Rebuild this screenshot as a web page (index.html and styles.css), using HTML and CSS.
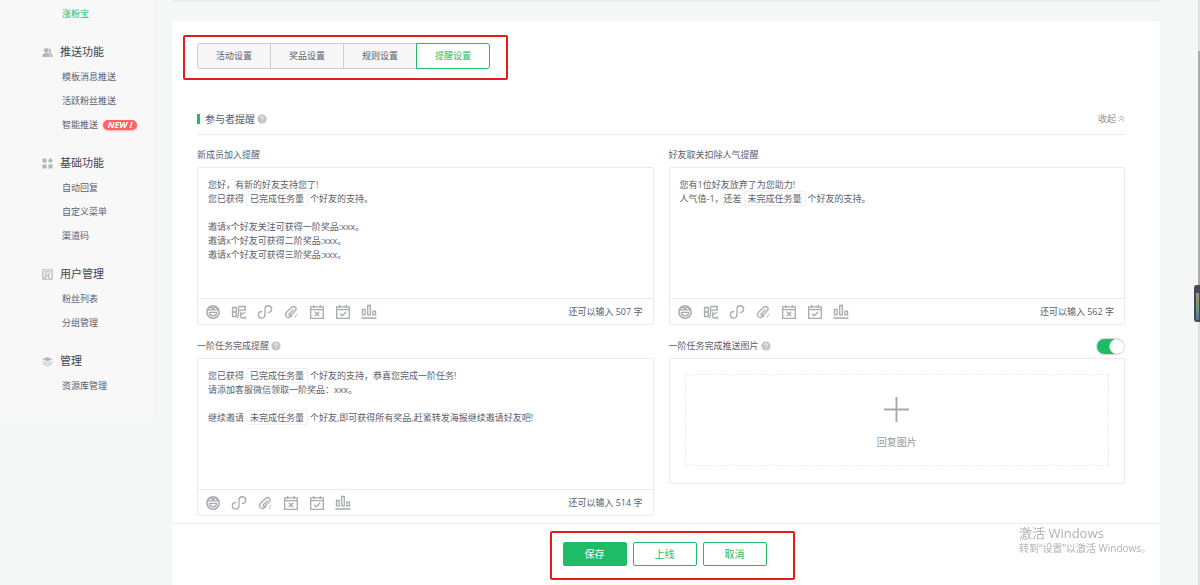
FILE: index.html
```html
<!DOCTYPE html>
<html lang="zh-CN">

<head>
    <meta charset="UTF-8">
    <meta name="viewport" content="width=device-width, initial-scale=1.0">
    <title>提醒设置</title>
    <link rel="stylesheet" href="styles.css">
</head>

<body>
    <!-- shared icons -->
    <svg class="sprite" aria-hidden="true">
        <symbol id="i-smile" viewBox="0 0 16 16">
            <circle cx="8" cy="8" r="6.2" stroke-width="1.5" />
            <path d="M2 5.800h12M8 3v2.800M4.300 8.400h7.400q-.2 3.400-3.700 3.400T4.300 8.400z" />
            <path d="M3.300 5.800q.3-2.600 2.300-2.600t2 2.600M8.400 5.800q.2-2.600 2-2.600t2.300 2.600" />
        </symbol>
        <symbol id="i-nick" viewBox="0 0 16 16">
            <path d="M1.500 3.500h3.700v9H1.500zM1.500 8h3.700M7.500 2.500h6.700v3.700H7.500M7.500 2.500v6.500q0 3-1.300 5M9.800 7.800v5.200q0 1 1 1h3.700v-1.500M14.300 8.300l-4.500 2.400" />
        </symbol>
        <symbol id="i-link" viewBox="0 0 16 16">
            <path d="M5.200 7.500H4.200a3.300 3.300 0 1 0 3.800 3.300V5a3.300 3.300 0 1 1 3.800 3.300h-1" />
        </symbol>
        <symbol id="i-clip" viewBox="0 0 16 16">
            <path d="M10.800 5.400L6.400 9.700q-.9 1.200.2 1.700.8.300 1.600-.5l4-4q1.800-2.200.2-3.700-1.800-1.500-3.900.4L3.600 8.300q-2 2.300-.3 4.300 2 1.900 4.400-.1l1.500-1.400M12 12.700h1.200M13.300 10.500h.9" />
        </symbol>
        <symbol id="i-calx" viewBox="0 0 16 16">
            <path d="M1.700 2.800h12.600v11.500H1.700zM1.700 5.600h12.600M4.700 1v3M11.300 1v3M5.800 7.800l4.400 4.200M10.200 7.800l-4.400 4.200" />
        </symbol>
        <symbol id="i-calok" viewBox="0 0 16 16">
            <path d="M1.700 2.800h12.600v11.500H1.700zM1.700 5.600h12.600M4.700 1v3M11.300 1v3M5 9.600l2.300 2.200 3.900-4" />
        </symbol>
        <symbol id="i-chart" viewBox="0 0 16 16">
            <path d="M1.500 5.500h2.600v5.400H1.500zM6.700 1.500h2.600v9.400H6.700zM11.900 7.200h2.600v3.700h-2.600zM.5 14h15" />
        </symbol>
        <symbol id="i-help" viewBox="0 0 10 10">
            <circle cx="5" cy="5" r="4.6" fill="#c2c4c8" />
            <path d="M3.600 4.100a1.400 1.400 0 1 1 2 1.200q-.6.3-.6.8M5 7v.8" fill="none" stroke="#fff" />
        </symbol>
    </svg>

    <div class="layout">
        <nav class="sidebar">
            <ul class="menu">
                <li><a class="active" href="#">涨粉宝</a></li>
            </ul>
            <h3>
                <svg viewBox="0 0 12 12">
                    <circle cx="4.600" cy="3.600" r="2.600" />
                    <path d="M.2 10.800q0-3.800 4.400-4.400 4.400.6 4.400 4.400zM7.600 1.200a2.500 2.500 0 0 1 .8 4.700q3.200.9 3.400 4.900H10Q9.800 7.600 7.200 6.200q1.700-2.500.4-5z" />
                </svg>推送功能
            </h3>
            <ul class="menu">
                <li><a href="#">模板消息推送</a></li>
                <li><a href="#">活跃粉丝推送</a></li>
                <li><a href="#">智能推送</a><span class="new">NEW !</span></li>
            </ul>
            <h3>
                <svg viewBox="0 0 12 12">
                    <path d="M.5.500h4.500v4.500H.5zM.5 7h4.500v4.500H.5zM7 7h4.500v4.500H7zM9.200 0L12 2.800 9.200 5.600 6.400 2.800z" />
                </svg>基础功能
            </h3>
            <ul class="menu">
                <li><a href="#">自动回复</a></li>
                <li><a href="#">自定义菜单</a></li>
                <li><a href="#">渠道码</a></li>
            </ul>
            <h3>
                <svg viewBox="0 0 12 12">
                    <path d="M1 .8h10v10.400H1zM3 3.200h6M3 5.500h2.500M3 11q.3-3.500 3.200-4M8.500 5q-2 1.500-1.500 3.500L9 11" fill="none" stroke="#b4b6b9" stroke-width="1.300" />
                </svg>用户管理
            </h3>
            <ul class="menu">
                <li><a href="#">粉丝列表</a></li>
                <li><a href="#">分组管理</a></li>
            </ul>
            <h3>
                <svg viewBox="0 0 12 12">
                    <path d="M6 1l5.500 2.500L6 6 .5 3.500z" />
                    <path d="M.8 6L6 8.300 11.200 6M.8 8.400L6 10.700l5.200-2.300" fill="none" stroke="#b4b6b9" />
                </svg>管理
            </h3>
            <ul class="menu">
                <li><a href="#">资源库管理</a></li>
            </ul>
        </nav>

        <main class="content">
            <div class="prev-card"></div>
            <div class="card">
                <div class="mark mark-tabs">
                    <div class="tabs">
                        <button type="button">活动设置</button>
                        <button type="button">奖品设置</button>
                        <button type="button">规则设置</button>
                        <button type="button" class="on">提醒设置</button>
                    </div>
                </div>

                <div class="section-head">
                    <h2>参与者提醒</h2>
                    <svg class="help"><use href="#i-help" /></svg>
                    <a class="fold" href="#">收起
                        <svg viewBox="0 0 8 8"><path d="M1 4l3-3 3 3M1 7l3-3 3 3" /></svg>
                    </a>
                </div>

                <div class="grid">
                    <section>
                        <div class="label" id="l1">新成员加入提醒</div>
                        <div class="editor">
                            <div class="text" contenteditable="true" role="textbox" aria-labelledby="l1" spellcheck="false">
                                <p>您好，有新的好友支持您了!</p>
                                <p>您已获得<span class="token">已完成任务量</span>个好友的支持。</p>
                                <p><br></p>
                                <p>邀请x个好友关注可获得一阶奖品:xxx。</p>
                                <p>邀请x个好友可获得二阶奖品:xxx。</p>
                                <p>邀请x个好友可获得三阶奖品:xxx。</p>
                            </div>
                            <div class="tools">
                                <button type="button" aria-label="表情"><svg><use href="#i-smile" /></svg></button>
                                <button type="button" aria-label="昵称"><svg><use href="#i-nick" /></svg></button>
                                <button type="button" aria-label="小程序"><svg><use href="#i-link" /></svg></button>
                                <button type="button" aria-label="链接"><svg><use href="#i-clip" /></svg></button>
                                <button type="button" aria-label="未完成"><svg><use href="#i-calx" /></svg></button>
                                <button type="button" aria-label="已完成"><svg><use href="#i-calok" /></svg></button>
                                <button type="button" aria-label="排行"><svg><use href="#i-chart" /></svg></button>
                                <span class="count">还可以输入 507 字</span>
                            </div>
                        </div>
                    </section>

                    <section>
                        <div class="label" id="l2">好友取关扣除人气提醒</div>
                        <div class="editor">
                            <div class="text" contenteditable="true" role="textbox" aria-labelledby="l2" spellcheck="false">
                                <p>您有1位好友放弃了为您助力!</p>
                                <p>人气值-1，还差<span class="token">未完成任务量</span>个好友的支持。</p>
                            </div>
                            <div class="tools">
                                <button type="button" aria-label="表情"><svg><use href="#i-smile" /></svg></button>
                                <button type="button" aria-label="昵称"><svg><use href="#i-nick" /></svg></button>
                                <button type="button" aria-label="小程序"><svg><use href="#i-link" /></svg></button>
                                <button type="button" aria-label="链接"><svg><use href="#i-clip" /></svg></button>
                                <button type="button" aria-label="未完成"><svg><use href="#i-calx" /></svg></button>
                                <button type="button" aria-label="已完成"><svg><use href="#i-calok" /></svg></button>
                                <button type="button" aria-label="排行"><svg><use href="#i-chart" /></svg></button>
                                <span class="count">还可以输入 562 字</span>
                            </div>
                        </div>
                    </section>

                    <section>
                        <div class="label"><span id="l3">一阶任务完成提醒</span><svg class="help"><use href="#i-help" /></svg></div>
                        <div class="editor">
                            <div class="text" contenteditable="true" role="textbox" aria-labelledby="l3" spellcheck="false">
                                <p>您已获得<span class="token">已完成任务量</span>个好友的支持，恭喜您完成一阶任务!</p>
                                <p>请添加客服微信领取一阶奖品：xxx。</p>
                                <p><br></p>
                                <p>继续邀请<span class="token">未完成任务量</span>个好友,即可获得所有奖品,赶紧转发海报继续邀请好友吧!</p>
                            </div>
                            <div class="tools">
                                <button type="button" aria-label="表情"><svg><use href="#i-smile" /></svg></button>
                                <button type="button" aria-label="小程序"><svg><use href="#i-link" /></svg></button>
                                <button type="button" aria-label="链接"><svg><use href="#i-clip" /></svg></button>
                                <button type="button" aria-label="未完成"><svg><use href="#i-calx" /></svg></button>
                                <button type="button" aria-label="已完成"><svg><use href="#i-calok" /></svg></button>
                                <button type="button" aria-label="排行"><svg><use href="#i-chart" /></svg></button>
                                <span class="count">还可以输入 514 字</span>
                            </div>
                        </div>
                    </section>

                    <section>
                        <div class="label">
                            <label for="pushimg">一阶任务完成推送图片</label><svg class="help"><use href="#i-help" /></svg>
                            <input class="switch" type="checkbox" id="pushimg" checked>
                        </div>
                        <div class="upload">
                            <button type="button">
                                <svg viewBox="0 0 26 26"><path d="M13 0v26M0 13h26" /></svg>
                                回复图片
                            </button>
                        </div>
                    </section>
                </div>

                <div class="footer">
                    <div class="mark mark-actions">
                        <button type="button" class="btn primary">保存</button>
                        <button type="button" class="btn">上线</button>
                        <button type="button" class="btn">取消</button>
                    </div>
                </div>
            </div>
        </main>
    </div>

    <div class="watermark">
        <p class="big">激活 Windows</p>
        <p>转到“设置”以激活 Windows。</p>
    </div>
    <div class="scrollbar"></div>
    <div class="dock"></div>
</body>

</html>
```
FILE: styles.css
```css
* {
    margin: 0;
    padding: 0;
    box-sizing: border-box;
}

body {
    background-color: #f5f7f7;
    color: #5a6070;
    font-family: "Open Sans", "Noto Sans CJK SC", sans-serif;
    font-size: 9px;
    line-height: 14px;
}

button {
    font: inherit;
    color: inherit;
    background: none;
    border: none;
    cursor: pointer;
}

a {
    color: inherit;
    text-decoration: none;
}

.sprite {
    display: none;
}

.layout {
    display: flex;
    align-items: flex-start;
    min-height: 100vh;
}

/* sidebar */

.sidebar {
    width: 153px;
    flex-shrink: 0;
    padding: 2px 0 22px 42px;
    background-color: #f8f8f8;
}

.sidebar h3 {
    display: flex;
    align-items: center;
    gap: 7px;
    height: 26px;
    margin-top: 13px;
    font-size: 11px;
    font-weight: normal;
    color: #40444c;
}

.sidebar h3 svg {
    width: 11px;
    height: 11px;
    fill: #b4b6b9;
}

.menu {
    list-style: none;
    padding-left: 20px;
}

.menu li {
    display: flex;
    align-items: center;
    gap: 5px;
    height: 24px;
}

.menu .active {
    color: #1fbc68;
}

.new {
    width: 34px;
    height: 10px;
    border-radius: 5px;
    background-color: #fb6264;
    box-shadow: 0 1px 2px #fbaeae;
    color: #fff;
    font-style: italic;
    font-weight: bold;
    line-height: 9px;
    text-align: center;
}

/* main card */

.content {
    flex: 1;
    margin: 0 40px 0 19px;
}

.prev-card {
    height: 1px;
    margin-bottom: 20px;
    background-color: #eceeee;
    box-shadow: 0 1px 1px #eff1f1;
}

.card {
    padding-top: 14px;
    background-color: #fff;
    border-radius: 3px 3px 0 0;
}

.mark {
    display: flex;
    width: fit-content;
    border: 2px solid #e02018;
    border-radius: 2px;
}

.mark-tabs {
    margin-left: 11px;
    padding: 6px 16px 9px 12px;
}

.tabs {
    display: flex;
}

.tabs button {
    width: 74px;
    height: 26px;
    margin-right: -1px;
    border: 1px solid #ccced4;
    background-color: #f7f7f8;
}

.tabs button:first-child {
    border-radius: 3px 0 0 3px;
}

.tabs button.on {
    margin-right: 0;
    border-color: #1fbc68;
    border-radius: 0 3px 3px 0;
    background-color: #fff;
    color: #1fbc68;
}

.section-head {
    display: flex;
    align-items: center;
    height: 32px;
    margin: 23px 35px 8px 25px;
    border-bottom: 1px solid #ececee;
}

.section-head h2 {
    padding-left: 5px;
    border-left: 3px solid #1fbc68;
    font-size: 10px;
    font-weight: normal;
    line-height: 10px;
}

.help {
    width: 10px;
    height: 10px;
    margin-left: 2px;
}

.fold {
    display: flex;
    align-items: center;
    gap: 2px;
    margin-left: auto;
    color: #909299;
}

.fold svg {
    width: 7px;
    height: 7px;
    fill: none;
    stroke: #a4a6ac;
}

.grid {
    display: grid;
    grid-template-columns: 1fr 1fr;
    align-items: start;
    gap: 9px 15px;
    margin: 0 35px 7px 25px;
}

.label {
    display: flex;
    align-items: center;
    height: 24px;
}

.editor {
    border: 1px solid #ebebed;
    border-radius: 2px;
}

.text {
    min-height: 130px;
    padding: 10px;
    outline: none;
}

.token {
    margin: 0 2px;
    padding: 0 3px;
    border: 1px solid #f0f0f3;
    border-radius: 2px;
}

.tools {
    display: flex;
    align-items: center;
    gap: 10px;
    height: 26px;
    padding: 0 10px 0 7px;
    border-top: 1px solid #ebebed;
}

.tools button {
    display: flex;
}

.tools svg {
    width: 16px;
    height: 16px;
    fill: none;
    stroke: #a8aaaf;
    stroke-width: 1.3;
}

.count {
    margin-left: auto;
}

/* switch */

.switch {
    appearance: none;
    width: 29px;
    height: 17px;
    margin-left: auto;
    border: 1px solid #d8dadc;
    border-radius: 9px;
    background: #fff;
    cursor: pointer;
}

.switch:checked {
    background: radial-gradient(circle at 20px 50%, #fff 7px, #1fbc68 8px);
}

/* image upload */

.upload {
    padding: 15px 15px 17px;
    border: 1px solid #ebebed;
    border-radius: 2px;
}

.upload button {
    display: flex;
    flex-direction: column;
    align-items: center;
    justify-content: center;
    gap: 13px;
    width: 100%;
    height: 92px;
    padding-top: 6px;
    border: 1px dashed #ececee;
    color: #96989e;
    font-size: 10px;
}

.upload svg {
    width: 25px;
    height: 25px;
    stroke: #a6a8ae;
    stroke-width: 2;
}

/* bottom buttons */

.footer {
    display: flex;
    justify-content: center;
    padding: 7px 0 5px 12px;
    border-top: 1px solid #ececee;
}

.mark-actions {
    gap: 6px;
    padding: 9px 26px 12px 11px;
}

.btn {
    width: 64px;
    height: 24px;
    border: 1px solid #1fbc68;
    border-radius: 2px;
    color: #1fbc68;
    font-size: 10px;
}

.btn.primary {
    background-color: #1fbc68;
    color: #fff;
}

/* things lying over the page */

.watermark {
    position: fixed;
    right: 55px;
    bottom: 30px;
    width: 126px;
    color: #b0b2b4;
    font-size: 10px;
    white-space: nowrap;
}

.watermark .big {
    font-size: 13px;
    line-height: 16px;
}

.scrollbar {
    position: fixed;
    top: 0;
    right: 0;
    bottom: 0;
    width: 2px;
    background: linear-gradient(#dedede 51px, #acacac 51px, #acacac 300px, #dedede 300px);
}

.dock {
    position: fixed;
    top: 285px;
    right: 0;
    width: 6px;
    height: 37px;
    border: 2px solid #454858;
    border-right-width: 1px;
    border-top-width: 8px;
    border-radius: 3px 0 0 3px;
    background: linear-gradient(#b09a7c, #84936c, #5f9690, #5b6f95);
}
```
